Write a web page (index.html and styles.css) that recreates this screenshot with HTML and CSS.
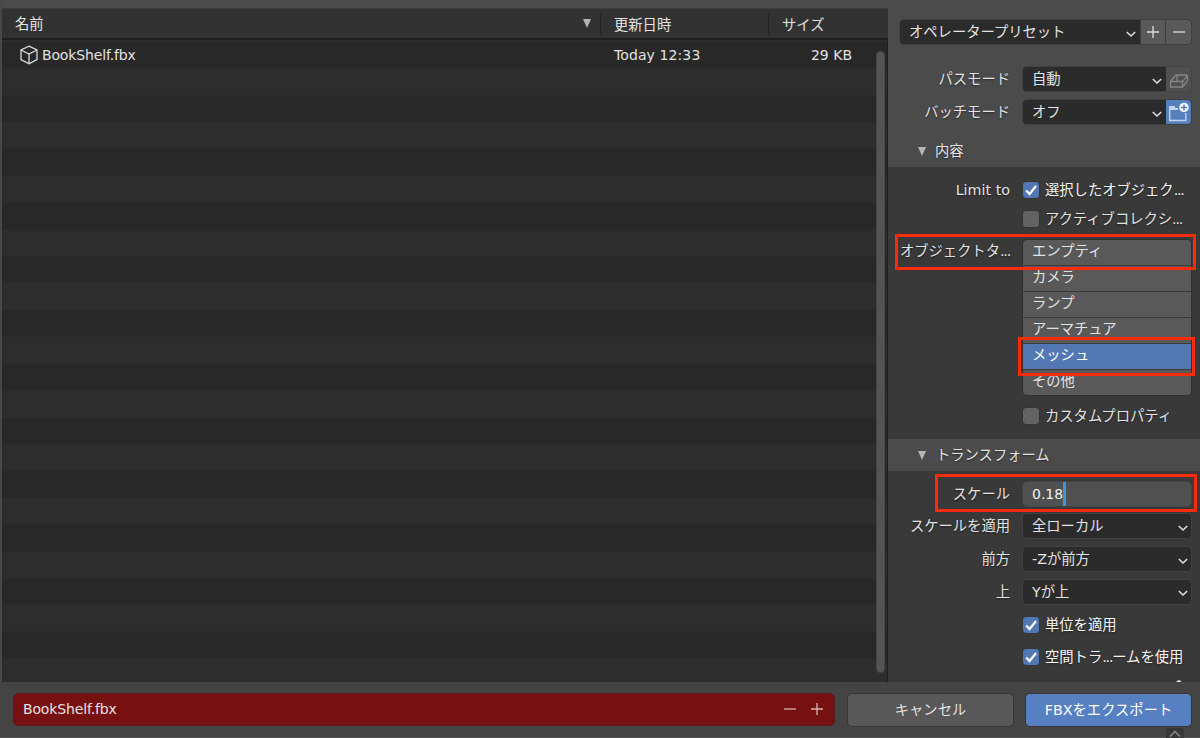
FILE: index.html
```
<!DOCTYPE html>
<html lang="ja">
<head>
    <meta charset="UTF-8">
    <meta name="viewport" content="width=device-width, initial-scale=1.0">
    <title>FBXをエクスポート</title>
    <link rel="stylesheet" href="styles.css">
</head>
<body>

    <!-- Shared icon shapes -->
    <svg class="defs">
        <symbol id="chevron" viewBox="0 0 10 8"><path d="M0.8 2 L5 6 L9.2 2"/></symbol>
        <symbol id="check" viewBox="0 0 16 16"><path d="M3.2 8.4 L6.6 12 L13 4"/></symbol>
        <symbol id="plus" viewBox="0 0 14 14"><path d="M1 7 H13 M7 1 V13"/></symbol>
        <symbol id="minus" viewBox="0 0 14 14"><path d="M1 7 H13"/></symbol>
    </svg>

    <div class="window">
        <div class="main">

            <!-- File List -->
            <div class="file-browser">
                <div class="columns">
                    <div class="col name">名前<svg class="sort" viewBox="0 0 8 9"><path d="M0 0 H8 L4 9 Z"/></svg></div>
                    <div class="col date">更新日時</div>
                    <div class="col size">サイズ</div>
                </div>
                <div class="file-list">
                    <div class="file-row">
                        <svg class="cube" viewBox="0 0 18 20"><path d="M9 1.2 L17 5 V14.6 L9 18.8 L1 14.6 V5 Z M1 5 L9 9 L17 5 M9 9 V18.8"/></svg>
                        <span class="file-name latin">BookShelf.fbx</span>
                        <span class="file-date">Today 12:33</span>
                        <span class="file-size">29 KB</span>
                    </div>
                    <div class="scrollbar"></div>
                </div>
            </div>

            <!-- Export Options -->
            <div class="options">
                <div class="top-options">
                    <div class="preset">
                        <div class="select">オペレータープリセット<svg class="chevron"><use href="#chevron"/></svg></div>
                        <button class="square"><svg class="sign"><use href="#plus"/></svg></button>
                        <button class="square last"><svg class="sign"><use href="#minus"/></svg></button>
                    </div>
                    <div class="row">
                        <label>パスモード</label>
                        <div class="select joined">自動<svg class="chevron"><use href="#chevron"/></svg></div>
                        <button class="square last disabled">
                            <svg class="box-icon" viewBox="0 0 20 16"><path d="M1.5 8.5 L6.5 2.5 Q7 2 8 2 H17 Q18.5 2 18.5 3.5 V7 Q18.5 8 18 8.5 L13.5 14 H1.5 Z M1.5 8.5 H13.5 V14 M13.5 8.5 L18.2 2.8 M8 2 V8.5"/></svg>
                        </button>
                    </div>
                    <div class="row">
                        <label>バッチモード</label>
                        <div class="select joined">オフ<svg class="chevron"><use href="#chevron"/></svg></div>
                        <button class="square last active">
                            <svg class="folder-icon" viewBox="0 0 25 24">
                                <path class="fill" d="M3 6 H9 V8 H12 V10 H3 Z"/>
                                <path d="M3.7 8 V20.5 H19.8 V13"/>
                                <circle cx="18" cy="7.5" r="4.7"/>
                                <path class="cross" d="M15 7.5 H21 M18 4.5 V10.5"/>
                            </svg>
                        </button>
                    </div>
                </div>

                <div class="panel-header first"><svg class="sort" viewBox="0 0 8 9"><path d="M0 0 H8 L4 9 Z"/></svg>内容</div>
                <div class="panel include">
                    <div class="row check-row">
                        <label>Limit to</label>
                        <span class="checkbox checked"><svg><use href="#check"/></svg></span>
                        <span class="check-label on">選択したオブジェク<span class="dots">...</span></span>
                    </div>
                    <div class="row check-row">
                        <label></label>
                        <span class="checkbox"></span>
                        <span class="check-label">アクティブコレクシ<span class="dots">...</span></span>
                    </div>
                    <div class="row types-row">
                        <label>オブジェクトタ<span class="dots">...</span></label>
                        <div class="types">
                            <div class="type">エンプティ</div>
                            <div class="type">カメラ</div>
                            <div class="type">ランプ</div>
                            <div class="type">アーマチュア</div>
                            <div class="type selected">メッシュ</div>
                            <div class="type">その他</div>
                        </div>
                    </div>
                    <div class="row check-row">
                        <label></label>
                        <span class="checkbox"></span>
                        <span class="check-label">カスタムプロパティ</span>
                    </div>
                </div>

                <div class="panel-header"><svg class="sort" viewBox="0 0 8 9"><path d="M0 0 H8 L4 9 Z"/></svg>トランスフォーム</div>
                <div class="panel transform">
                    <div class="row">
                        <label>スケール</label>
                        <div class="number">0.18<span class="caret"></span></div>
                    </div>
                    <div class="row">
                        <label>スケールを適用</label>
                        <div class="select">全ローカル<svg class="chevron"><use href="#chevron"/></svg></div>
                    </div>
                    <div class="row">
                        <label>前方</label>
                        <div class="select">-Zが前方<svg class="chevron"><use href="#chevron"/></svg></div>
                    </div>
                    <div class="row">
                        <label>上</label>
                        <div class="select">Yが上<svg class="chevron"><use href="#chevron"/></svg></div>
                    </div>
                    <div class="row">
                        <label></label>
                        <span class="checkbox checked"><svg><use href="#check"/></svg></span>
                        <span class="check-label on">単位を適用</span>
                    </div>
                    <div class="row">
                        <label></label>
                        <span class="checkbox checked"><svg><use href="#check"/></svg></span>
                        <span class="check-label on">空間トラ<span class="dots">...</span>ームを使用</span>
                    </div>
                    <svg class="cut-off" viewBox="0 0 6 2"><path d="M0 2 L2 0.3 H4 L5.5 2 Z"/></svg>
                </div>
            </div>
        </div>

        <!-- Bottom Bar -->
        <div class="bottom-bar">
            <div class="filename">
                <span class="latin">BookShelf.fbx</span>
                <svg class="sign"><use href="#minus"/></svg>
                <svg class="sign"><use href="#plus"/></svg>
            </div>
            <button class="cancel">キャンセル</button>
            <button class="export">FBXをエクスポート</button>
            <div class="region-toggle"><svg viewBox="0 0 12 7"><path d="M1 6.5 L6 1.5 L11 6.5"/></svg></div>
        </div>

        <!-- Red highlight frames -->
        <div class="highlight empty"></div>
        <div class="highlight mesh"></div>
        <div class="highlight scale"></div>
    </div>

</body>
</html>
```
FILE: styles.css
```
/* General */
* {
    box-sizing: border-box;
}

body {
    margin: 0;
    background-color: #4b4b4b;
    color: #e2e2e2;
    font-family: 'DejaVu Sans', 'Noto Sans CJK JP', sans-serif;
    font-size: 14.3px;
    line-height: 24px;
    overflow: hidden;
}

svg {
    fill: none;
    stroke: #dcdcdc;
    flex-shrink: 0;
}

button {
    font: inherit;
    color: inherit;
    padding: 0;
    border: none;
}

.defs {
    display: none;
}

.latin {
    font-size: 14px;
    letter-spacing: -0.15px;
}

.dots {
    letter-spacing: -1.2px;
}

.window {
    position: relative;
    width: 1200px;
    height: 738px;
    display: flex;
    flex-direction: column;
    overflow: hidden;
}

.main {
    height: 682px;
    display: flex;
}

/* File List */
.file-browser {
    width: 888px;
    border-left: 2px solid #484848;
    border-top: 8px solid #4b4b4b;
    display: flex;
    flex-direction: column;
}

.columns {
    height: 32px;
    display: flex;
    align-items: center;
    background-color: #323232;
    border-top: 1px solid #3b3b3b;
    border-bottom: 2px solid #202020;
}

.col {
    height: 20px;
    line-height: 22px;
    padding-left: 13px;
    border-left: 1px solid #222;
}

.col.name {
    width: 598px;
    border-left: none;
    display: flex;
    justify-content: space-between;
    align-items: center;
    padding-right: 9px;
}

.col.date {
    width: 168px;
}

.sort {
    width: 8px;
    height: 9px;
    fill: #b4b4b4;
    stroke: none;
}

.columns .sort {
    margin-bottom: 1px;
}

.file-list {
    flex: 1;
    padding-top: 2px;
    display: flex;
    justify-content: space-between;
    border-right: 1px solid #1f1f1f;
    /* alternating rows */
    background: repeating-linear-gradient(#282828 0 26.83px, #2d2d2d 26.83px 53.66px) 0 1.7px #282828;
}

.file-row {
    height: 25px;
    width: 850px;
    display: flex;
    align-items: center;
    padding-left: 18px;
    font-size: 14px;
}

.cube {
    width: 18px;
    height: 20px;
    stroke-width: 1.3;
}

.file-name {
    width: 576px;
    padding-left: 4px;
}

.file-date {
    flex: 1;
    letter-spacing: 0.1px;
}

.scrollbar {
    width: 9px;
    height: 622px;
    margin: 9px 2px 0 0;
    border-radius: 5px;
    background-color: #545454;
    border: 1px solid #454545;
}

/* Export Options */
.options {
    width: 312px;
    display: flex;
    flex-direction: column;
    background-color: #393939;
}

.top-options {
    height: 135px;
    padding: 19px 8px 0 11px;
    background-color: #4b4b4b;
}

.preset {
    display: flex;
    margin-bottom: 21px;
}

.row {
    display: flex;
    align-items: center;
    height: 26px;
}

.top-options .row {
    margin-bottom: 7px;
}

label {
    width: 122px;
    padding-right: 12px;
    flex-shrink: 0;
    text-align: right;
    white-space: nowrap;
    text-shadow: 0 1px 2px rgba(0, 0, 0, 0.5);
}

.top-options label {
    width: 123px;
}

.panel label {
    width: 134px;
}

.select {
    flex: 1;
    height: 26px;
    display: flex;
    justify-content: space-between;
    align-items: center;
    padding: 0 3px 0 9px;
    background-color: #2b2b2b;
    border: 1px solid #414141;
    border-radius: 5px;
    white-space: nowrap;
}

.preset .select,
.select.joined {
    padding-right: 4px;
    border-radius: 5px 0 0 5px;
    border-right: none;
}

.chevron {
    width: 10px;
    height: 8px;
    margin-top: 3px;
    stroke-width: 1.6;
}

.square {
    width: 26px;
    height: 26px;
    display: flex;
    align-items: center;
    justify-content: center;
    background-color: #595959;
    border: 1px solid #3e3e3e;
}

.square.last {
    border-radius: 0 5px 5px 0;
    border-left: none;
}

.square.disabled {
    background-color: #505050;
    border-color: #464646;
}

.square.active {
    background-color: #5580bd;
}

.sign {
    width: 14px;
    height: 14px;
    stroke-width: 1.3;
}

.square .sign {
    margin-bottom: 1px;
}

.box-icon {
    width: 20px;
    height: 16px;
    margin-top: 3px;
    stroke: #858585;
    stroke-width: 1.3;
}

.folder-icon {
    width: 25px;
    height: 24px;
    stroke: #c4d4ec;
    stroke-width: 1.4;
}

.folder-icon .fill {
    fill: #c4d4ec;
    stroke: none;
}

.folder-icon circle {
    fill: #fff;
    stroke: none;
}

.folder-icon .cross {
    stroke: #4b73ab;
}

/* Collapsible Panels */
.panel-header {
    height: 32px;
    display: flex;
    align-items: center;
    gap: 10px;
    padding-left: 30px;
    background-color: #4b4b4b;
    text-shadow: 0 1px 2px rgba(0, 0, 0, 0.5);
}

.panel-header.first {
    gap: 9px;
}

.panel {
    padding-right: 8px;
}

.include {
    height: 272px;
    padding-top: 8px;
}

.check-row {
    height: 29px;
}

.checkbox {
    width: 18px;
    height: 18px;
    border-radius: 4px;
    background-color: #636363;
    border: 1px solid #343434;
    flex-shrink: 0;
}

.checkbox.checked {
    background-color: #5178b4;
}

.checkbox svg {
    display: block;
    width: 16px;
    height: 16px;
    stroke: #fff;
    stroke-width: 2.2;
}

.check-label {
    padding-left: 5px;
    white-space: nowrap;
    text-shadow: 0 1px 2px rgba(0, 0, 0, 0.4);
}

.check-label.on {
    color: #f5f5f5;
}

.types-row {
    height: 158px;
    margin: 6px 0 4px;
    align-items: flex-start;
}

.types {
    flex: 1;
    border: 1px solid #303030;
    border-radius: 5px;
    overflow: hidden;
    height: 157px;
}

.type {
    height: 26.1px;
    padding-left: 9px;
    line-height: 23px;
    background-color: #595959;
    border-bottom: 1px solid #3a3a3a;
}

.type:last-child {
    border-bottom: none;
}

.type.selected {
    background-color: #5379b5;
    color: #fff;
}

.transform {
    position: relative;
    flex: 1;
    padding-top: 9.5px;
    overflow: hidden;
}

.transform .row {
    margin-bottom: 6.8px;
}

.number {
    flex: 1;
    display: flex;
    align-items: center;
    height: 26px;
    padding-left: 9px;
    background-color: #505050;
    border: 1px solid #444;
    border-radius: 5px;
    font-size: 14px;
    color: #f0f0f0;
}

.caret {
    width: 3px;
    height: 24px;
    background-color: #3d95e0;
}

/* top edge of the next label, hidden under the bottom bar */
.cut-off {
    position: absolute;
    right: 18px;
    bottom: 0;
    width: 6px;
    height: 2px;
    fill: #ddd;
    stroke: none;
}

/* Bottom Bar */
.bottom-bar {
    position: relative;
    height: 56px;
    display: flex;
    align-items: flex-start;
    padding: 11px 8px 0 13px;
    background-color: #444;
    border-bottom: 1px solid #545454;
}

.filename {
    width: 822px;
    height: 33px;
    display: flex;
    align-items: center;
    gap: 13px;
    padding: 0 10px 1px 9px;
    background-color: #771010;
    border: 1px solid #5a1c1c;
    border-radius: 5px;
}

.filename .latin {
    flex: 1;
    padding-right: 10px;
}

.filename .sign {
    stroke: #d6b4b4;
}

.cancel,
.export {
    height: 34px;
    padding-bottom: 1px;
    border: 1px solid #363636;
    border-radius: 5px;
}

.cancel {
    width: 167px;
    margin-left: 12px;
    background-color: #585858;
}

.export {
    width: 167px;
    margin-left: 11px;
    background-color: #5680c2;
    color: #fff;
}

.region-toggle {
    position: absolute;
    right: 16px;
    bottom: -1px;
    width: 18px;
    height: 10px;
    padding: 0 3px;
    line-height: 0;
    background-color: #383838;
    border-radius: 3px 3px 0 0;
}

.region-toggle svg {
    width: 12px;
    height: 7px;
    margin-top: 2px;
    stroke: #8c8c8c;
    stroke-width: 1.5;
}

/* Highlight Frames */
.highlight {
    position: absolute;
    border: 3px solid #fb2b09;
}

.highlight.empty {
    left: 895px;
    top: 234px;
    width: 301px;
    height: 36px;
}

.highlight.mesh {
    left: 1018px;
    top: 337px;
    width: 177px;
    height: 39px;
}

.highlight.scale {
    left: 935px;
    top: 474px;
    width: 262px;
    height: 38px;
}
```
